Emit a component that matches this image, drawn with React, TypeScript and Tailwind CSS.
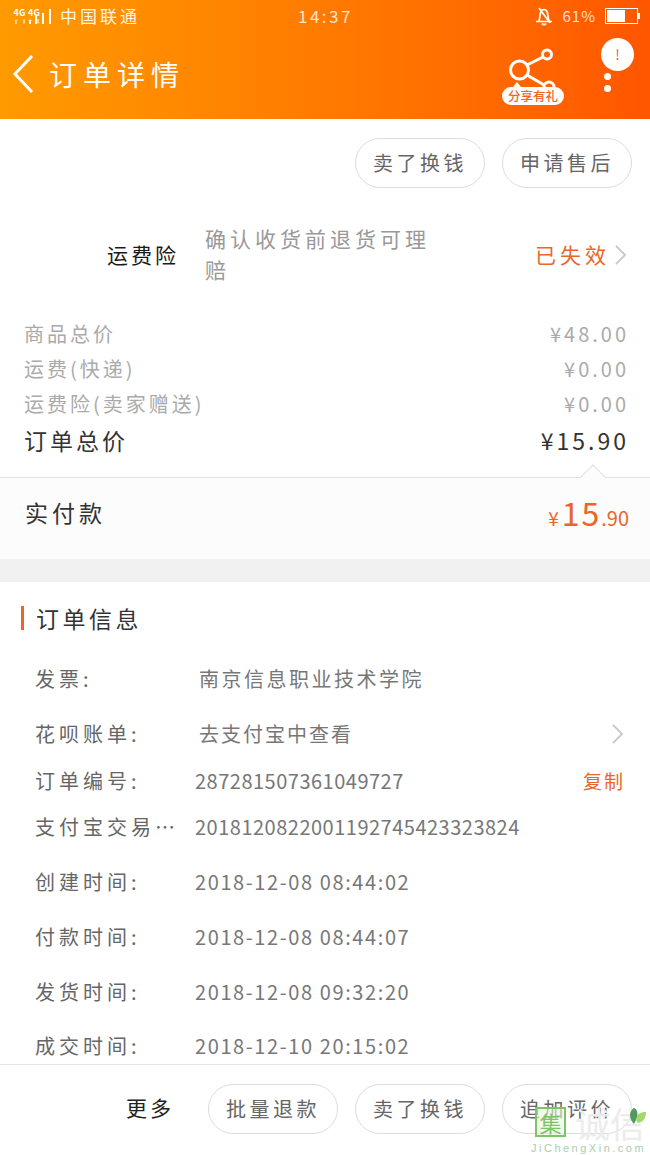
import React from "react";

function Chevron({ className }: { className: string }) {
  return (
    <svg viewBox="0 0 16 24" className={className} fill="none" stroke="#c8c8c8" strokeWidth="2">
      <path d="M3 2l10 10-10 10" />
    </svg>
  );
}

function PillButton({ label }: { label: string }) {
  return (
    <div className="flex h-[50px] w-[130px] items-center justify-center rounded-[25px] border border-[#dcdcdc] text-[20px] tracking-[3.5px] text-[#666]">
      {label}
    </div>
  );
}

function PriceRow({ label, value, className }: { label: string; value: string; className: string }) {
  return (
    <div className={`flex items-center justify-between pl-[24px] pr-[21px] ${className}`}>
      <span>{label}</span>
      <span>{value}</span>
    </div>
  );
}

function FourG({ className }: { className: string }) {
  return (
    <div className={`flex flex-col items-center ${className}`}>
      <span className="text-[9px] font-bold leading-[9px]">4G</span>
      <svg width="12" height="5" viewBox="0 0 12 5" className="mt-[2px]" fill="#ffd27a">
        <path d="M1 5V2H0l2-2 2 2H3v3zM9 0v3H8l2 2 2-2h-1V0z" />
      </svg>
    </div>
  );
}

function InfoRow({
  label,
  value,
  className,
  valueClass,
  right,
}: {
  label: string;
  value: string;
  className: string;
  valueClass: string;
  right?: React.ReactNode;
}) {
  return (
    <div className={`flex h-8 items-center pr-[25px] ${className}`}>
      <span className="w-[195px] shrink-0 whitespace-nowrap pl-[35px] text-[20px] tracking-[4px] text-[#666]">{label}</span>
      <span className={`flex-1 whitespace-nowrap text-[20px] text-[#777] ${valueClass}`}>{value}</span>
      {right}
    </div>
  );
}

export default function App() {
  return (
    <div className="relative flex h-[1155px] w-[650px] flex-col overflow-hidden bg-white font-['Noto_Sans_CJK_SC','Noto_Sans',sans-serif]">
      <header className="h-[119px] shrink-0 bg-gradient-to-r from-[#ff9a00] to-[#ff5600] text-white">
        <div className="flex h-[32px] items-center pl-[12px] pr-[12px]">
          <FourG className="w-[15px]" />
          <FourG className="ml-[1px] w-[12px]" />
          <svg width="22" height="16" viewBox="0 0 22 16" className="-ml-[11px] mt-[1px]" fill="#fff">
            <rect x="0" y="11" width="2" height="4" />
            <rect x="6" y="7" width="2" height="8" />
            <rect x="13" y="4" width="2" height="11" />
            <rect x="20" y="0" width="2" height="15" />
          </svg>
          <span className="ml-[9px] text-[17px] tracking-[3px] opacity-90">中国联通</span>
          <span className="ml-[158px] text-[17px] tracking-[2.5px] opacity-80">14:37</span>
          <svg width="20" height="20" viewBox="0 0 20 20" className="ml-auto mr-[9px]" fill="none" stroke="#fff" strokeWidth="1.7">
            <path d="M2 15.500h16M4.500 15.500c2-3 1-7 2.500-10 1-2.500 5-2.500 6 0 1.500 3 .5 7 2.500 10M8 17.500c1 1.500 3 1.500 4 0M5 2l11 15" />
          </svg>
          <span className="mr-[9px] text-[15px] tracking-[1px] opacity-80">61%</span>
          <div className="relative flex h-[16px] w-[33px] items-center border border-white p-[1px]">
            <div className="h-full w-[61%] bg-white" />
            <div className="absolute -right-[3px] top-[4px] h-[6px] w-[2px] bg-white" />
          </div>
        </div>
        <div className="flex h-[87px] items-center pl-[12px]">
          <svg width="22" height="40" viewBox="0 0 22 40" fill="none" stroke="#fff" strokeWidth="3" className="mb-[3px]">
            <path d="M20 2L3 20l17 18" />
          </svg>
          <span className="mb-[3px] ml-[15px] text-[28px] tracking-[6px]">订单详情</span>
          <div className="relative ml-auto mr-[37px] mt-[16px] h-[57px] w-[62px] self-start">
            <svg width="62" height="48" viewBox="0 0 62 48" fill="none" stroke="#fff" strokeWidth="3">
              <circle cx="17.500" cy="22" r="9" />
              <circle cx="45" cy="6.500" r="4.500" />
              <circle cx="47" cy="39" r="5" />
              <path d="M25 17l16-8M25 27l17 10" />
              <path d="M11 39l4-5 4 5z" fill="#fff" stroke="none" />
            </svg>
            <div className="absolute left-0 top-[39px] flex h-[18px] w-[62px] items-center justify-center rounded-[10px] bg-white text-[12.500px] font-medium text-[#f0642a]">
              分享有礼
            </div>
          </div>
          <div className="mr-[16px] mt-[6px] flex w-[33px] flex-col items-center self-start">
            <div className="flex h-[33px] w-[33px] items-center justify-center rounded-full bg-white text-[14px] text-[#e8673a]">!</div>
            <div className="mt-[2px] h-[7px] w-[7px] -translate-x-[10px] rounded-full bg-white" />
            <div className="mt-[5px] h-[7px] w-[7px] -translate-x-[10px] rounded-full bg-white" />
          </div>
        </div>
      </header>

      <main className="min-h-0 flex-1 overflow-hidden">
        <div className="flex justify-end gap-[17px] pr-[18px] pt-[19px]">
          <PillButton label="卖了换钱" />
          <PillButton label="申请售后" />
        </div>

        <div className="mt-[36px] flex h-[62px] items-center pr-[22px]">
          <span className="w-[205px] shrink-0 pl-[107px] text-[21px] tracking-[3px] text-[#1a1a1a]">运费险</span>
          <span className="w-[235px] -translate-y-[1px] text-[21px] leading-[31px] tracking-[4px] text-[#999]">确认收货前退货可理赔</span>
          <span className="ml-auto text-[21px] tracking-[4px] text-[#e8662a]">已失效</span>
          <Chevron className="ml-[3px] h-[22px] w-[15px]" />
        </div>

        <div className="mt-[30px] text-[20px] text-[#aaa]">
          <PriceRow label="商品总价" value="¥48.00" className="h-[35px] tracking-[3px]" />
          <PriceRow label="运费(快递)" value="¥0.00" className="h-[35px] tracking-[3px]" />
          <PriceRow label="运费险(卖家赠送)" value="¥0.00" className="h-[35px] tracking-[3px]" />
          <PriceRow label="订单总价" value="¥15.90" className="h-[38px] text-[23px] tracking-[3px] text-[#333]" />
        </div>

        <div className="relative mt-[18px] flex h-[82px] items-start justify-between border-t border-[#e2e2e2] bg-[#fcfcfc] pl-[25px] pr-[21px] pt-[17px]">
          <div className="absolute -top-[10px] right-[48px] h-[18px] w-[18px] rotate-45 border-l border-t border-[#e2e2e2] bg-[#fcfcfc]" />
          <span className="text-[23px] tracking-[4px] text-[#333]">实付款</span>
          <span className="flex items-baseline text-[#e8662a]">
            <span className="text-[19px]">¥</span>
            <span className="ml-[3px] text-[32px] leading-[34px] tracking-[2px]">15</span>
            <span className="text-[20px]">.90</span>
          </span>
        </div>

        <div className="h-[23px] bg-[#f1f1f1]" />

        <div className="mt-[24px] flex h-[24px] items-center pl-[21px]">
          <div className="h-[24px] w-[3px] bg-[#e8662a]" />
          <span className="ml-[12px] text-[23px] tracking-[3.5px] text-[#333]">订单信息</span>
        </div>

        <InfoRow className="mt-[33px]" label="发票:" value="南京信息职业技术学院" valueClass="ml-[4px] tracking-[2.5px]" />
        <InfoRow
          className="mt-[23px]"
          label="花呗账单:"
          value="去支付宝中查看"
          valueClass="ml-[4px] tracking-[2px]"
          right={<Chevron className="h-[22px] w-[15px]" />}
        />
        <InfoRow
          className="mt-[15px]"
          label="订单编号:"
          value="287281507361049727"
          valueClass="tracking-[0.5px]"
          right={<span className="text-[19px] tracking-[2px] text-[#e8662a]">复制</span>}
        />
        <InfoRow className="mt-[14px]" label="支付宝交易…" value="2018120822001192745423323824" valueClass="tracking-[0.5px]" />
        <InfoRow className="mt-[23px]" label="创建时间:" value="2018-12-08 08:44:02" valueClass="tracking-[1.6px]" />
        <InfoRow className="mt-[23px]" label="付款时间:" value="2018-12-08 08:44:07" valueClass="tracking-[1.6px]" />
        <InfoRow className="mt-[23px]" label="发货时间:" value="2018-12-08 09:32:20" valueClass="tracking-[1.6px]" />
        <InfoRow className="mt-[22px]" label="成交时间:" value="2018-12-10 20:15:02" valueClass="tracking-[1.6px]" />
      </main>

      <footer className="flex h-[91px] shrink-0 items-start border-t border-[#e4e4e4] bg-white pr-[18px] pt-[19px]">
        <span className="ml-[126px] mt-[8px] text-[21px] tracking-[3px] text-[#222]">更多</span>
        <div className="ml-auto flex gap-[17px]">
          <PillButton label="批量退款" />
          <PillButton label="卖了换钱" />
          <PillButton label="追加评价" />
        </div>
      </footer>

      <div className="absolute bottom-[1px] right-0 flex h-[50px] w-[119px] flex-col">
        <div className="flex h-[36px] items-center pl-[4px]">
          <div className="flex h-[30px] w-[31px] items-center justify-center border-2 border-[#7cc46a] bg-[#eaf6d8]/60 text-[22px] leading-none text-[#7cc46a]">集</div>
          <span className="ml-[9px] text-[35px] leading-none tracking-[0px] text-[#ececec]">诚信</span>
        </div>
        <span className="mt-[3px] whitespace-nowrap font-['Liberation_Sans',sans-serif] text-[11px] leading-[10px] tracking-[2.5px] text-[#a9cdb0]">JiChengXin.com</span>
        <svg width="18" height="18" viewBox="0 0 18 18" className="absolute right-[3px] top-[3px]">
          <path d="M5 1c3 1 4 5 3 9-1 3-2 5-3 7-2-2-4-5-4-9 0-3 2-6 4-7z" fill="#4f9a5e" />
          <path d="M8 10c0-3 4-5 9-5 0 5-2 10-8 11-2-2-2-4-1-6z" fill="#a3d86a" />
        </svg>
      </div>
    </div>
  );
}
